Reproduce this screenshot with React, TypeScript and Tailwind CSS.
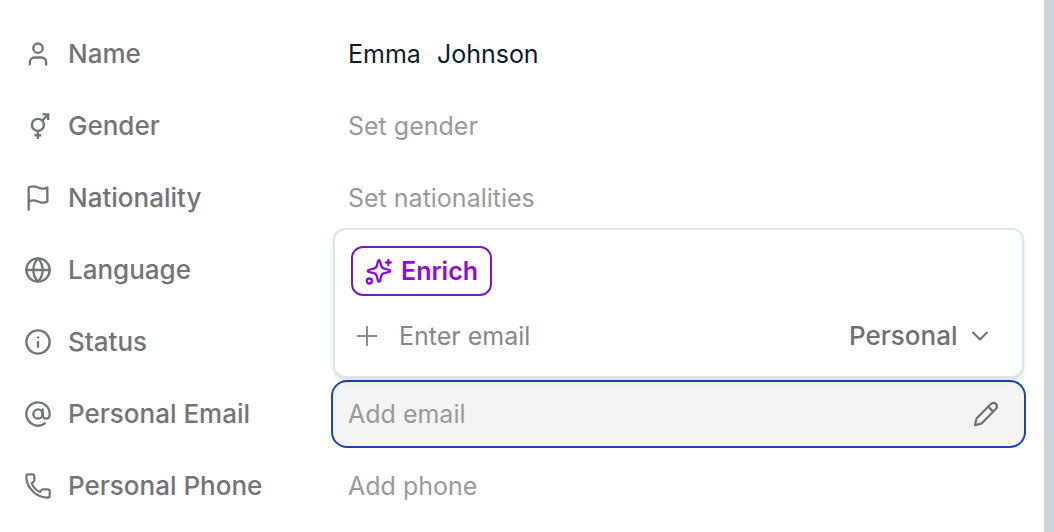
import React, { useState } from "react";
import { AtSign, ChevronDown, Globe, Info, Plus, User } from "lucide-react";

type IconProps = {
  className?: string;
  strokeWidth?: number;
};

type FieldRowProps = {
  id: string;
  label: string;
  icon: React.ElementType<IconProps>;
  children: React.ReactNode;
};

const GenderIcon = ({ className }: IconProps) => (
  <svg
    viewBox="0 0 28 28"
    fill="none"
    stroke="currentColor"
    strokeWidth="2.4"
    className={className}
  >
    <circle cx="13.9" cy="12.9" r="6" />
    <path d="M13.9 18.9v8.1M10.5 23.2h6.8M18.2 8.6l5.6-5.6M18.6 2.4h5.6v5.6" />
  </svg>
);

const FlagIcon = ({ className, strokeWidth }: IconProps) => (
  <svg
    viewBox="0 0 24 24"
    fill="none"
    stroke="currentColor"
    strokeWidth={strokeWidth}
    strokeLinecap="round"
    strokeLinejoin="round"
    className={className}
  >
    <path d="M4 15s1-1 4-1 5 2 8 2 4-1 4-1V3s-1 1-4 1-5-2-8-2-4 1-4 1zM4 22v-7" />
  </svg>
);

const PhoneIcon = ({ className }: IconProps) => (
  <svg
    viewBox="0 0 28 28"
    fill="none"
    stroke="currentColor"
    strokeWidth="2.2"
    strokeLinecap="round"
    strokeLinejoin="round"
    className={className}
  >
    <path d="M4.3 2.3h4c1.1 0 2 .9 2 2v3.8c0 .8-.3 1.3-.9 1.8l-1.7 1.4c1.6 3.9 4.4 6.9 8.3 8.6l1.5-1.8c.5-.6 1.1-.8 1.8-.8h4.4c1.1 0 2 .9 2 2v4.3c0 1.2-.9 2.1-2 2.1C12.300 25.700 2.300 15.700 2.300 4.300c0-1.100.9-2 2-2z" />
  </svg>
);

const PencilIcon = ({ className }: IconProps) => (
  <svg
    viewBox="0 0 28 28"
    fill="none"
    stroke="currentColor"
    strokeWidth="2.2"
    strokeLinecap="round"
    strokeLinejoin="round"
    className={className}
  >
    <path d="M3 25.200l1.300-6c.1-.5.3-.8.7-1.200L18.800 4c1.500-1.500 3.700-1.500 5.100-.1s1.400 3.600-.1 5.100L10.100 22.900c-.4.4-.7.6-1.200.7z" />
    <path d="M16.300 6.700l4.900 4.900" />
  </svg>
);

const EnrichIcon = ({ className }: IconProps) => (
  <svg
    viewBox="0 0 28 28"
    fill="none"
    stroke="currentColor"
    strokeWidth="2.3"
    strokeLinecap="round"
    strokeLinejoin="round"
    className={className}
  >
    <path d="M14 3.1c.5 0 .9.3 1 .8l1.1 4.6c.4 1.8 1.4 2.8 3.2 3.2l5.2 1.3c1 .3 1 1.6 0 1.9l-5.2 1.3c-1.8.4-2.8 1.4-3.2 3.2L15 24c-.2.9-1.8.9-2 0l-1.1-4.6c-.4-1.8-1.4-2.8-3.2-3.2l-5.2-1.3c-1-.3-1-1.6 0-1.9l5.2-1.3c1.8-.4 2.8-1.4 3.2-3.2L13 3.9c.1-.5.5-.8 1-.8z" />
    <path d="M23.3 3v5M20.800 5.500h5" />
    <circle cx="4.400" cy="24" r="2.500" />
  </svg>
);

const FieldRow = ({ id, label, icon: Icon, children }: FieldRowProps) => (
  <div className="flex h-[72px] items-center">
    <label
      htmlFor={id}
      className="flex w-[307px] shrink-0 items-center gap-4 font-medium text-[#737478]"
    >
      <Icon className="size-7" strokeWidth={2} />
      {label}
    </label>
    {children}
  </div>
);

const EmptyValue = ({ id, text }: { id: string; text: string }) => (
  <button
    id={id}
    type="button"
    className="px-[17px] text-left text-[25px] text-[#999999]"
  >
    {text}
  </button>
);

const EmailPopover = () => {
  const [email, setEmail] = useState("");

  return (
    <div className="absolute inset-x-0 bottom-full z-10 mb-1 flex flex-col items-start gap-4 rounded-xl border-2 border-[#dfe4e8] bg-white p-4 shadow-md">
      <button
        type="button"
        className="flex h-[50px] items-center gap-2 rounded-xl border-2 border-[#8114c0] px-3 text-[25px] font-semibold text-[#8f0bd8]"
      >
        <EnrichIcon className="size-7" />
        Enrich
      </button>
      <div className="flex h-12 w-full items-center gap-4 pr-3">
        <Plus className="size-8 shrink-0 text-[#8c8c8c]" strokeWidth={1.5} />
        <input
          type="email"
          aria-label="Email"
          placeholder="Enter email"
          value={email}
          onChange={(e) => setEmail(e.target.value)}
          className="min-w-0 flex-1 text-[25px] outline-none placeholder:text-[#84888e]"
        />
        <div className="relative flex items-center text-[#707070]">
          <select
            aria-label="Email type"
            className="appearance-none bg-transparent pr-9 font-medium outline-none"
          >
            <option>Personal</option>
          </select>
          <ChevronDown
            className="pointer-events-none absolute right-0 size-7"
            strokeWidth={1.75}
          />
        </div>
      </div>
    </div>
  );
};

const App = () => {
  return (
    <main className="min-h-screen border-r-[10px] border-[#d0d4de] bg-white pt-[18px] pr-[18px] pl-6 font-['Inter',sans-serif] text-[26px] leading-8">
      <FieldRow id="name" label="Name" icon={User}>
        <button
          id="name"
          type="button"
          className="flex gap-4 px-[17px] text-[25px] text-[#0b1c2b]"
        >
          <span>Emma</span>
          <span>Johnson</span>
        </button>
      </FieldRow>
      <FieldRow id="gender" label="Gender" icon={GenderIcon}>
        <EmptyValue id="gender" text="Set gender" />
      </FieldRow>
      <FieldRow id="nationality" label="Nationality" icon={FlagIcon}>
        <EmptyValue id="nationality" text="Set nationalities" />
      </FieldRow>
      <FieldRow id="language" label="Language" icon={Globe}>
        <EmptyValue id="language" text="" />
      </FieldRow>
      <FieldRow id="status" label="Status" icon={Info}>
        <EmptyValue id="status" text="" />
      </FieldRow>
      <FieldRow id="email" label="Personal Email" icon={AtSign}>
        <div className="relative flex h-[68px] min-w-0 flex-1 items-center rounded-2xl border-2 border-[#1d44b8] bg-[#f4f4f4] pr-6 pl-[15px]">
          <EmailPopover />
          <input
            id="email"
            type="text"
            placeholder="Add email"
            className="min-w-0 flex-1 text-[25px] outline-none placeholder:text-[#999999]"
          />
          <button type="button" aria-label="Edit email">
            <PencilIcon className="size-7 text-[#707070]" />
          </button>
        </div>
      </FieldRow>
      <FieldRow id="phone" label="Personal Phone" icon={PhoneIcon}>
        <EmptyValue id="phone" text="Add phone" />
      </FieldRow>
    </main>
  );
};

export default App;
